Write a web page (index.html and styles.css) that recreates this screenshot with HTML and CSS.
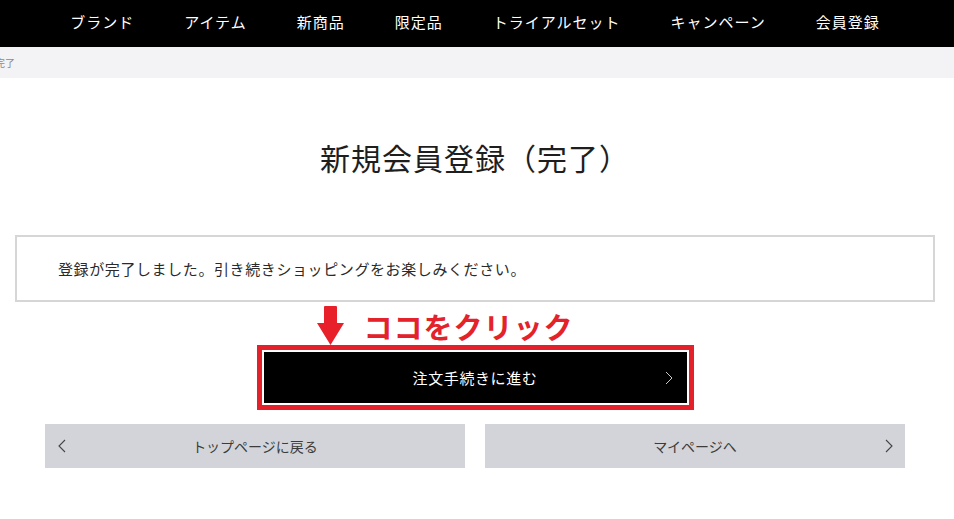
FILE: index.html
```html
<!DOCTYPE html>
<html lang="ja">
<head>
<meta charset="utf-8">
<title>新規会員登録（完了）</title>
<link rel="stylesheet" href="styles.css">
</head>
<body>
<header class="nav">
  <nav class="nav-inner">
    <a class="nav-item" href="#">ブランド</a>
    <a class="nav-item" href="#">アイテム</a>
    <a class="nav-item" href="#">新商品</a>
    <a class="nav-item" href="#">限定品</a>
    <a class="nav-item" href="#">トライアルセット</a>
    <a class="nav-item" href="#">キャンペーン</a>
    <a class="nav-item" href="#">会員登録</a>
  </nav>
</header>
<div class="crumbs"><span class="crumb-text">完了</span></div>
<main class="page">
  <h1 class="title">新規会員登録（完了）</h1>
  <div class="message">登録が完了しました。引き続きショッピングをお楽しみください。</div>
  <div class="callout">
    <svg class="arrow" width="27" height="39" viewBox="0 0 27 39">
      <path d="M7 1 Q7 0 8 0 L19 0 Q20 0 20 1 L20 17 L27 17 L13.5 39 L0 17 L7 17 Z" fill="#e8202a"/>
    </svg>
    <span class="callout-text">ココをクリック</span>
  </div>
  <div class="frame">
    <a class="primary-btn" href="#">
      <span></span>
      <span class="primary-label">注文手続きに進む</span>
      <svg class="chev-primary" width="8" height="14" viewBox="0 0 8 14"><polyline points="1,1 7,7 1,13" fill="none" stroke="#c8c8c8" stroke-width="1"/></svg>
    </a>
  </div>
  <div class="sub-row">
    <a class="sub-btn" href="#">
      <svg class="chev-left" width="8" height="14" viewBox="0 0 8 14"><polyline points="7,1 1,7 7,13" fill="none" stroke="#444" stroke-width="1.1"/></svg>
      <span class="sub-label">トップページに戻る</span>
      <span></span>
    </a>
    <a class="sub-btn" href="#">
      <span></span>
      <span class="sub-label">マイページへ</span>
      <svg class="chev-right" width="8" height="14" viewBox="0 0 8 14"><polyline points="1,1 7,7 1,13" fill="none" stroke="#444" stroke-width="1.1"/></svg>
    </a>
  </div>
</main>
</body>
</html>
```
FILE: styles.css
```css
* { box-sizing: border-box; }
html, body { margin: 0; padding: 0; background: #fff; }
body {
  font-family: "Noto Sans CJK JP", "Noto Sans", sans-serif;
  color: #222;
  width: 954px;
  overflow: hidden;
}
a { text-decoration: none; color: inherit; }

.nav { background: #000; height: 47px; }
.nav-inner {
  width: 950px;
  height: 47px;
  display: flex;
  justify-content: center;
  align-items: center;
  gap: 50px;
  padding-bottom: 4px;
}
.nav-item {
  color: #fff;
  font-size: 15px;
  letter-spacing: 1px;
  line-height: 20px;
}

.crumbs {
  background: #f3f3f6;
  height: 31px;
  display: flex;
  align-items: center;
  overflow: hidden;
}
.crumb-text {
  font-size: 10px;
  color: #8a8a8a;
  margin-left: -5px;
  line-height: 12px;
}

.page { width: 950px; }

.title {
  margin: 59px 0 0;
  text-align: center;
  font-size: 30px;
  font-weight: normal;
  letter-spacing: 1px;
  line-height: 40px;
  height: 40px;
  color: #1e1e1e;
}

.message {
  margin: 58px 15px 0;
  height: 67px;
  border: 2px solid #d6d6d6;
  display: flex;
  align-items: center;
  padding-left: 41px;
  font-size: 15px;
  letter-spacing: 0.6px;
  color: #2a2a2a;
}

.callout {
  width: 437px;
  height: 43px;
  margin: 0 auto;
  display: flex;
  align-items: flex-end;
  padding-left: 60px;
  gap: 20px;
}
.arrow { display: block; flex: none; }
.callout-text {
  color: #e3222b;
  font-size: 29px;
  font-weight: bold;
  letter-spacing: 1px;
  line-height: 30px;
  margin-bottom: 4px;
}

.frame {
  width: 437px;
  height: 65px;
  margin: 0 auto;
  border: 5px solid #e4212b;
  padding: 2px;
  background: #fff;
}
.primary-btn {
  height: 51px;
  background: #000;
  display: grid;
  grid-template-columns: 1fr auto 1fr;
  align-items: center;
  color: #fff;
}
.primary-label {
  font-size: 15px;
  letter-spacing: 0.6px;
  line-height: 20px;
}
.chev-primary { justify-self: end; margin-right: 14px; }

.sub-row {
  width: 860px;
  margin: 14px auto 0;
  display: flex;
  gap: 20px;
}
.sub-btn {
  flex: 1;
  height: 44px;
  background: #d3d4d9;
  display: grid;
  grid-template-columns: 1fr auto 1fr;
  align-items: center;
  color: #3c3c3c;
}
.sub-label { font-size: 14px; line-height: 20px; }
.chev-left { margin-left: 13px; }
.chev-right { justify-self: end; margin-right: 12px; }
```
